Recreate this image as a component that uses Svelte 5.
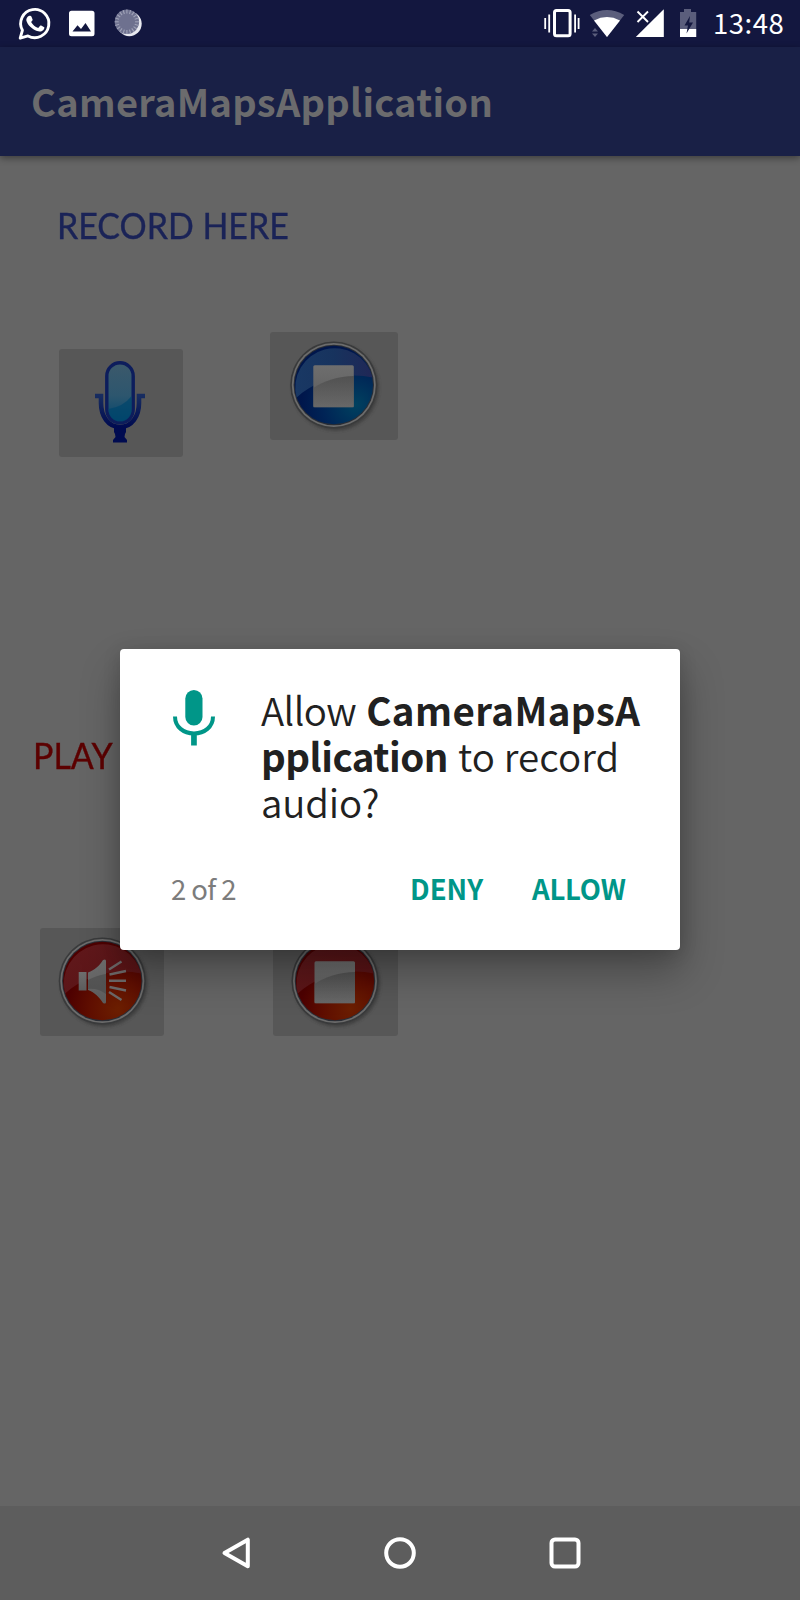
<script>
  const ticks = Array.from({ length: 20 }, (_, i) => i * 18);
</script>

{#snippet disc(cx, tone)}
  <circle cx={cx + 1.8} cy="55.3" r="43.4" fill="#303030" opacity=".6" filter="url(#soft)" />
  <circle {cx} cy="53" r="43.6" fill="#393a3b" />
  <circle {cx} cy="53" r="42" fill="#6c6c6c" />
  <circle {cx} cy="53" r="40.2" fill="#292d35" />
  <circle {cx} cy="53" r="39.2" fill="url(#{tone}-base)" />
  <path d="M{cx - 37.2} 65.5A39.2 39.2 0 1 1 {cx + 38.8} 45.5C{cx + 12} 39 {cx - 19} 48 {cx - 37.2} 65.5Z" fill="url(#{tone}-gloss)" />
{/snippet}

{#snippet square(x)}
  <rect {x} y="33.3" width="40.5" height="42" rx="1.5" fill="url(#silver)" />
  <path d="M{x} 56C{x + 10} 49 {x + 25} 44 {x + 40.5} 44V75.3H{x}Z" fill="url(#shade)" opacity=".6" />
{/snippet}

<svg class="defs" width="0" height="0" aria-hidden="true">
  <defs>
    <filter id="soft" x="-20%" y="-20%" width="140%" height="140%"><feGaussianBlur stdDeviation="1.6" /></filter>
    <radialGradient id="blue-base" cx=".78" cy=".75" r=".7"><stop stop-color="#00415f" /><stop offset=".6" stop-color="#002456" /><stop offset="1" stop-color="#00164b" /></radialGradient>
    <linearGradient id="blue-gloss" x1="0" y1="0" x2="1" y2="0"><stop stop-color="#193864" /><stop offset=".5" stop-color="#17335e" /><stop offset="1" stop-color="#202756" /></linearGradient>
    <radialGradient id="red-base" cx=".7" cy=".85" r=".65"><stop stop-color="#6c1f00" /><stop offset=".55" stop-color="#5f0e00" /><stop offset="1" stop-color="#4d0000" /></radialGradient>
    <linearGradient id="red-gloss" x1="0" y1="0" x2="1" y2="1"><stop stop-color="#62191c" /><stop offset="1" stop-color="#561214" /></linearGradient>
    <linearGradient id="silver" x1="0" y1="0" x2="0" y2="1"><stop stop-color="#6e6e6e" /><stop offset="1" stop-color="#5c5c5c" /></linearGradient>
    <linearGradient id="shade" x1="0" y1="0" x2="0" y2="1"><stop stop-color="#414141" /><stop offset="1" stop-color="#707070" /></linearGradient>
    <linearGradient id="capsule" x1="0" y1="0" x2="0" y2="1"><stop stop-color="#3c596b" /><stop offset=".55" stop-color="#2d566e" /><stop offset="1" stop-color="#00466e" /></linearGradient>
    <linearGradient id="cradle" x1="0" y1="0" x2="0" y2="1"><stop stop-color="#172c60" /><stop offset="1" stop-color="#000b50" /></linearGradient>
  </defs>
</svg>

<div class="screen">
  <header class="status">
    <svg width="150" height="47" viewBox="0 0 150 47">
      <path d="M20.2 38.2L22.4 30.3A14.1 14.1 0 1 1 28 35.9Z" fill="none" stroke="#fff" stroke-width="2.9" stroke-linejoin="round" />
      <path d="M28.7 16.1C30.2 15.3 31 15.5 31.5 16.8L32.6 19.4C32.9 20.3 31.6 21.3 31.1 22C33 25.2 35 26.8 38.2 27.9L40.1 25.8C40.5 25.3 41 25.4 41.6 25.7L43.8 26.9C44.5 27.3 44.5 27.5 44.2 28.4C43 31.5 40 32 37 31C32 29.3 27.7 25 26.4 20.8C26 18.8 27.2 16.9 28.7 16.1Z" fill="#fff" />
      <path fill-rule="evenodd" d="M71.5 10.8H92Q94.5 10.8 94.5 13.3V33.8Q94.5 36.3 92 36.3H71.5Q69 36.3 69 33.8V13.3Q69 10.8 71.5 10.8ZM72.5 31.5H91L85.5 23L81 29L77.5 25.3Z" fill="#fff" />
      <circle cx="129.3" cy="23.8" r="12.4" fill="#e8e9f0" />
      <circle cx="126.9" cy="21.8" r="12.2" fill="#6e718f" />
      {#each ticks as angle}
        <path d="M126.9 9.6V13.6" stroke="#a0a3b8" stroke-width="1.1" transform="rotate({angle} 126.9 21.8)" />
      {/each}
    </svg>
    <div class="status-right">
      <svg width="160" height="47" viewBox="540 0 160 47">
        <rect x="554.5" y="10.6" width="15.6" height="25.2" rx="2" fill="none" stroke="#fff" stroke-width="3" />
        <path d="M545.2 18V29M549.2 14.5V32.5M575.1 14.5V32.5M578.6 18V29" stroke="#fff" stroke-width="1.8" />
        <path d="M607 37L589.8 15Q607 4.8 624.2 15Z" fill="#5b5e7c" />
        <path d="M607 37L594 20.4Q607 13.8 620 20.4Z" fill="#fff" />
        <path d="M592 31.5L595 28L598 31.5ZM592 33.5H598L595 37Z" fill="#5b5e7c" />
        <path d="M635.8 37L663.8 9.2V37Z" fill="#fff" />
        <path d="M637.5 11.5L648 22M648 11.5L637.5 22" stroke="#fff" stroke-width="1.9" />
        <path d="M684 9H691V12H696.2V37H680V12H684Z" fill="#5b5e7c" />
        <path d="M680 29H696.2V37H680Z" fill="#fff" />
        <path d="M690 16L684.5 25.5H688L686.5 33.5L693 22.5H689.2Z" fill="#14183f" />
      </svg>
      <span class="time">13:48</span>
    </div>
  </header>

  <div class="appbar"><h1>CameraMapsApplication</h1></div>

  <main>
    <h2 class="record">RECORD HERE</h2>
    <div class="row blue">
      <button class="mic" aria-label="Record">
        <svg width="124" height="108" viewBox="0 0 124 108">
          <path d="M36 47H42V54C42 67 49 78 61 78S80 67 80 54V47H86" fill="none" stroke="url(#cradle)" stroke-width="4.6" />
          <path d="M55 79H67V83Q65.5 85 65.5 88L68 91V93.5H54V91L56.5 88Q56.5 85 55 83Z" fill="#000b50" />
          <rect x="47.8" y="13.8" width="26.4" height="60" rx="13.2" fill="url(#capsule)" stroke="#0d1d5c" stroke-width="3.4" />
          <path d="M49.5 60Q64 58 72.7 47V61A11.6 11.6 0 0 1 49.5 61Z" fill="#00456c" opacity=".75" />
        </svg>
      </button>
      <button class="stop" aria-label="Stop recording">
        <svg width="128" height="108" viewBox="0 0 128 108">{@render disc(63.8, 'blue')}{@render square(43.3)}</svg>
      </button>
    </div>
    <h2 class="play">PLAY</h2>
    <div class="row red">
      <button aria-label="Play">
        <svg width="124" height="108" viewBox="0 0 124 108">
          {@render disc(62.3, 'red')}
          <path d="M38.7 44H46.5V62.5H38.7Z" fill="url(#silver)" />
          <path d="M48 44.5C55 42 59 38 63 32Q66 30.5 66 33V74Q66 76.5 63 75C59 69 55 64.5 48 62Z" fill="url(#silver)" />
          <path d="M48 52Q58 47 66 46V66Q58 60 48 61Z" fill="#4a4a4a" opacity=".6" />
          <path d="M69 41.5L81.5 33.5M69.5 46.5L86 43M69 52.7H86M69.5 59L86 62.5M69 64L81.5 72" stroke="#6b6868" stroke-width="2.4" />
        </svg>
      </button>
      <button class="stop" aria-label="Stop playback">
        <svg width="125" height="108" viewBox="0 0 125 108">{@render disc(62, 'red')}{@render square(41.5)}</svg>
      </button>
    </div>
  </main>

  <nav>
    <svg width="34" height="36" viewBox="0 0 34 36"><path d="M5.5 18L28.8 4.7V31.3Z" fill="none" stroke="#fff" stroke-width="4" stroke-linejoin="round" /></svg>
    <svg width="36" height="36" viewBox="0 0 36 36"><circle cx="18" cy="18" r="13.8" fill="none" stroke="#fff" stroke-width="4" /></svg>
    <svg width="36" height="36" viewBox="0 0 36 36"><rect x="4.5" y="4.5" width="27" height="27" rx="3.5" fill="none" stroke="#fff" stroke-width="4" /></svg>
  </nav>

  <div class="dialog" role="dialog">
    <div class="message">
      <svg width="42" height="56" viewBox="0 0 42 56">
        <rect x="12.3" y="0" width="17.2" height="35.5" rx="8.6" fill="#009688" />
        <path d="M2 26.5C2 37 10.5 43.4 21 43.4S40 37 40 26.5" fill="none" stroke="#009688" stroke-width="4" />
        <path d="M18.1 43H23.8V55.5H18.1Z" fill="#009688" />
      </svg>
      <p>
        <span class="line"><span class="allow-word">Allow</span><b class="name-start">CameraMapsA</b></span>
        <span class="line"><b class="name-end">pplication</b><span class="to-record">to record</span></span>
        <span class="line audio">audio?</span>
      </p>
    </div>
    <div class="actions">
      <span class="count">2 of 2</span>
      <button class="deny">DENY</button>
      <button class="allow">ALLOW</button>
    </div>
  </div>
</div>

<style>
  :global(body) { margin: 0; }
  .screen {
    position: relative;
    display: flex;
    flex-direction: column;
    width: 800px;
    height: 1600px;
    overflow: hidden;
    background: #656565;
    font-family: "Noto Sans CJK SC", "Noto Sans", sans-serif;
  }
  .defs { position: absolute; }
  svg { display: block; flex: none; }
  h1, h2, p { margin: 0; font-weight: 400; white-space: nowrap; }
  button { border: 0; padding: 0; background: none; font: inherit; color: inherit; }
  .status { display: flex; justify-content: space-between; height: 47px; background: #13173f; }
  .status-right { display: flex; width: 260px; }
  .time { margin-left: 13px; font-size: 27.5px; line-height: 45px; letter-spacing: .5px; color: #fff; }
  .appbar {
    height: 108.5px;
    background: #192046;
    box-shadow: 0 2px 7px rgba(0, 0, 0, .42);
    z-index: 1;
  }
  h1 { margin-left: 31px; font-size: 38px; font-weight: 700; line-height: 108px; letter-spacing: .3px; color: #6b6b6d; }
  main { flex: 1; }
  h2 {
    width: max-content;
    font-family: Lato, sans-serif;
    font-size: 37.5px;
    line-height: 46px;
    transform: scaleX(.905);
    transform-origin: left;
    -webkit-text-stroke: .4px currentColor;
  }
  .record { margin: 46px 0 0 57px; color: #1a2357; }
  .play { margin: 275px 0 0 33px; color: #5c0000; }
  .row { display: flex; align-items: flex-start; }
  .row button { background: #575757; border-radius: 3px; }
  .blue { margin: 84px 0 0 59px; }
  .blue .mic { margin-top: 17px; }
  .blue .stop { margin-left: 87px; }
  .red { margin: 150px 0 0 40px; }
  .red .stop { margin-left: 109px; }
  nav {
    display: flex;
    align-items: center;
    justify-content: center;
    gap: 129px;
    height: 94px;
    padding-left: 2px;
    box-sizing: border-box;
    background: #5d5d5d;
  }
  .dialog {
    position: absolute;
    left: 120px;
    top: 649px;
    width: 560px;
    height: 301px;
    border-radius: 4px;
    background: #fff;
    color: #212121;
    box-shadow: 2px 22px 42px rgba(0, 0, 0, .3), 0 3px 18px rgba(0, 0, 0, .14);
  }
  .message { display: flex; gap: 45px; padding: 41px 0 0 53px; }
  p { margin: -4px 0 0 1px; font-size: 38.5px; font-weight: 350; line-height: 46px; }
  b { font-weight: 700; }
  .line { display: flex; }
  .line > :last-child { margin-left: 10px; }
  .allow-word { letter-spacing: -.6px; }
  .name-start { letter-spacing: .4px; }
  .name-end { letter-spacing: -.5px; }
  .to-record { letter-spacing: .1px; }
  .audio { letter-spacing: -.2px; }
  .actions { display: flex; margin-top: 41px; padding-left: 51px; font-size: 27.5px; line-height: 46px; color: #009688; }
  .actions button { font-weight: 700; }
  .count { width: 239px; letter-spacing: -.6px; color: #7c7c7c; }
  .deny { width: 122px; text-align: left; }
  .allow { letter-spacing: -.2px; }
</style>
